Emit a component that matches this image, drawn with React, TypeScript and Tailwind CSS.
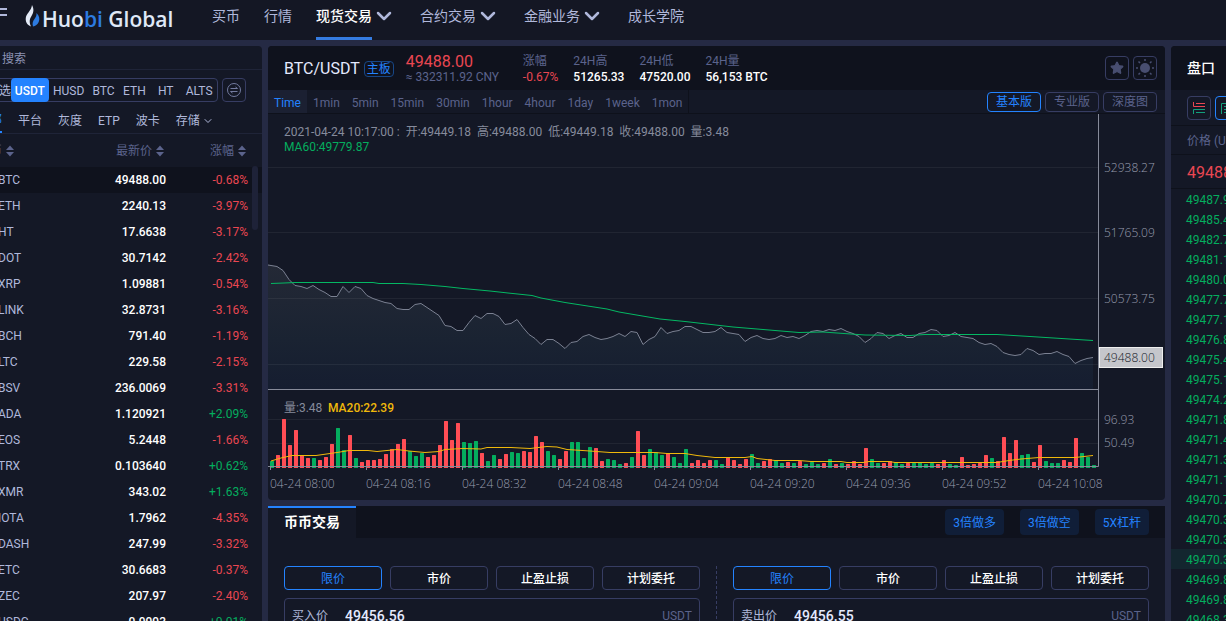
import React from 'react';
import { ChevronDown, Star } from 'lucide-react';

const topNav = [
  { label: '买币' },
  { label: '行情' },
  { label: '现货交易', menu: true, active: true },
  { label: '合约交易', menu: true },
  { label: '金融业务', menu: true },
  { label: '成长学院' },
];

const coins = [
  ['BTC', '49488.00', '-0.68%'],
  ['ETH', '2240.13', '-3.97%'],
  ['HT', '17.6638', '-3.17%'],
  ['DOT', '30.7142', '-2.42%'],
  ['XRP', '1.09881', '-0.54%'],
  ['LINK', '32.8731', '-3.16%'],
  ['BCH', '791.40', '-1.19%'],
  ['LTC', '229.58', '-2.15%'],
  ['BSV', '236.0069', '-3.31%'],
  ['ADA', '1.120921', '+2.09%'],
  ['EOS', '5.2448', '-1.66%'],
  ['TRX', '0.103640', '+0.62%'],
  ['XMR', '343.02', '+1.63%'],
  ['IOTA', '1.7962', '-4.35%'],
  ['DASH', '247.99', '-3.32%'],
  ['ETC', '30.6683', '-0.37%'],
  ['ZEC', '207.97', '-2.40%'],
  ['USDC', '0.9993', '+0.01%'],
];

const asks = [
  '49487.99', '49485.40', '49482.75', '49481.10', '49480.00', '49477.70', '49477.10',
  '49476.88', '49475.40', '49475.10', '49474.20', '49471.80', '49471.40', '49471.30',
  '49471.10', '49470.70', '49470.36', '49470.35', '49470.33', '49469.88', '49469.80',
  '49468.30',
];

const intervals = ['Time', '1min', '5min', '15min', '30min', '1hour', '4hour', '1day', '1week', '1mon'];

const stats = [
  { label: '涨幅', value: '-0.67%', down: true },
  { label: '24H高', value: '51265.33' },
  { label: '24H低', value: '47520.00' },
  { label: '24H量', value: '56,153 BTC' },
];

// One point per minute, 6 units apart
const price = [
  151, 152, 156, 165, 171, 172, 174, 171, 175, 178, 182, 182, 172, 178, 172, 174, 181, 184, 186, 188,
  189, 194, 195, 195, 190, 189, 193, 197, 201, 211, 212, 216, 216, 208, 201, 204, 199, 199, 202, 210,
  209, 205, 213, 220, 224, 230, 225, 225, 229, 234, 228, 227, 222, 220, 223, 225, 224, 222, 219, 222,
  217, 218, 230, 225, 222, 213, 219, 217, 216, 212, 212, 215, 218, 218, 217, 213, 218, 219, 220, 227,
  223, 221, 224, 225, 224, 221, 223, 222, 224, 221, 217, 216, 217, 215, 216, 214, 217, 219, 222, 228,
  224, 218, 219, 224, 221, 219, 223, 223, 219, 218, 215, 216, 222, 221, 218, 222, 223, 224, 228, 230,
  229, 232, 238, 240, 241, 240, 234, 236, 240, 239, 239, 237, 240, 242, 249, 246, 244, 243,
];

const ma60 =
  '3,169.5 16,169 27,168.5 105,168.5 111,169.5 135,169.5 153,170.5 177,172.5 195,174.5 222,177 240,179 264,181.5 273,184 297,188.5 339,195 351,198 392,205 417,207.5 465,213 531,218.5 555,218 597,221 642,221.5 657,220.5 729,220.5 762,222.5 825,226.5';

const ma20 =
  '3,347 13,344 24,341.5 48,341.5 69,338.5 81,336.5 100,336.5 109,337.5 129,335.5 141,337 157,338.5 171,337.5 177,335.5 195,334.5 213,335 219,333.5 243,333.5 262,334.5 279,332.5 289,333 299,335.5 322,337 342,338.5 387,338.5 399,339.5 417,339.5 429,341.5 447,343.5 477,343.5 484,342.5 489,344.5 507,346.5 531,346.5 543,347.5 573,347.5 579,348.5 595,348.5 601,347.5 621,347.5 627,348.5 729,348.5 741,346.5 753,345 771,343.5 807,343.5 825,341.5';

const volumes =
  'g5 r11 r47 r21 r36 r11 r8 g8 r6 r9 r22 g38 g16 r31 g8 r4 r6 r6 r7 r12 r17 r22 r27 g15 g10 g13 r9 r11 r21 r45 r26 r43 g24 g23 g25 r13 g5 g11 r7 r12 g14 g13 r15 r14 r30 r24 g15 g11 r7 r15 g24 g24 g8 g19 r18 r5 g7 g6 g2 r3 g9 r35 r11 g17 g14 g11 r13 g9 g3 g17 r3 r6 r3 r6 g6 g2 r9 r6 r2 r7 g12 g3 r5 r7 g6 g3 r4 g3 r5 g2 g4 g2 r3 g7 r2 g3 r2 r5 r2 r18 g7 g3 r3 r5 g4 g2 r3 g3 g4 g2 g3 r2 r6 g2 g1 r9 r1 r2 r3 r11 g8 r5 r29 r13 r26 g11 g12 r4 r21 g5 g3 g3 r6 r4 r28 g13 g9 g1'
    .split(' ')
    .map((v) => ({ up: v[0] === 'g', h: Number(v.slice(1)) }));

const times = ['08:00', '08:16', '08:32', '08:48', '09:04', '09:20', '09:36', '09:52', '10:08'];

export default function App() {
  return (
    <div className="flex h-screen flex-col overflow-hidden bg-[#252a44] font-['Roboto','Noto_Sans_CJK_SC',sans-serif] text-xs text-[#b0b8db]">
      <Header />
      <div className="mt-1.5 flex min-h-0 flex-1 gap-1.5">
        <MarketList />
        <main className="flex min-w-0 flex-1 flex-col gap-1.5">
          <ChartPanel />
          <TradePanel />
        </main>
        <OrderBook />
      </div>
    </div>
  );
}

function Header() {
  return (
    <header className="flex h-10 shrink-0 bg-[#141724]">
      <button aria-label="菜单" className="mt-2 h-2 w-[7px] shrink-0 border-y-2 border-[#b0b8db]" />
      <a href="#" aria-label="Huobi Global" className="ml-[18px] flex h-9 w-[187px] shrink-0 items-center whitespace-nowrap">
        <svg viewBox="0 0 16 24" className="mt-[-4px] h-6 w-4">
          <path d="M7 1C9 5 9 8 6.500 12C4.500 15 4 18 6 22.500C2 21 .7 18 .7 15C.7 9.500 6.500 7 7 1Z" fill="#e4ebf7" />
          <path d="M11.500 9C14.500 12 15 15 13.700 18C12.600 20.500 10.500 22 8 22.500C7 19 8 17 9.500 15C11 13 11.700 11.500 11.500 9Z" fill="#2d7be0" />
        </svg>
        <span className="ml-px pt-0.5 font-['Open_Sans','Noto_Sans',sans-serif] text-[21px] font-semibold text-[#dfe8f7]">
          Huo<span className="text-[#2d7be0]">bi</span> Global
        </span>
      </a>
      <nav className="flex shrink-0 text-sm">
        {topNav.map((item) => (
          <a
            key={item.label}
            href="#"
            className={`mr-6 flex h-10 items-start pt-1.5 ${item.active ? 'font-medium text-white' : ''}`}
          >
            <span className={`h-[34px] ${item.active ? 'border-b-[3px] border-[#357ce1]' : ''}`}>{item.label}</span>
            {item.menu && <ChevronDown size={24} strokeWidth={2.5} className="-mt-0.5 text-[#b0b8db]" />}
          </a>
        ))}
      </nav>
    </header>
  );
}

function SortIcon() {
  return (
    <svg viewBox="0 0 8 12" className="h-3 w-2" fill="#5b638c">
      <path d="M4 0.500L8 5H0Z" />
      <path d="M4 11.500L0 7H8Z" />
    </svg>
  );
}

function MarketList() {
  return (
    <aside className="relative w-[262px] shrink-0 overflow-hidden rounded-tr-sm bg-[#141826]">
      <div className="-ml-4">
        <div className="flex h-6 items-center border-b border-[#1f2438] pt-0.5 pl-[18px]">
          <input
            aria-label="搜索"
            placeholder="搜索"
            className="w-full bg-transparent outline-none placeholder:text-[#8c93b4]"
          />
        </div>
        <div className="mt-2 flex h-6 gap-1">
          <div className="flex w-[234px] shrink-0 items-center rounded-sm border border-[#373d63]">
            <button className="w-[26px] pt-0.5 text-right">自选</button>
            <button className="h-6 w-[38px] rounded-sm bg-[#2483ff] pt-0.5 font-medium text-white">USDT</button>
            <button className="w-10 pt-0.5">HUSD</button>
            <button className="w-[30px] pt-0.5">BTC</button>
            <button className="w-8 pt-0.5">ETH</button>
            <button className="w-[31px] pt-0.5">HT</button>
            <button className="w-9 pt-0.5">ALTS</button>
          </div>
          <button aria-label="切换计价" className="flex w-6 items-center justify-center rounded-sm border border-[#373d63]">
            <svg viewBox="0 0 16 16" className="h-4 w-4" fill="none" stroke="#737b9f">
              <circle cx="8" cy="8" r="6.500" />
              <path d="M4.500 6.500H11.500L9.500 5M11.500 9.500H4.500L6.500 11" />
            </svg>
          </button>
        </div>
        <div className="flex h-8 items-center gap-4 border-b border-[#1f2438] pt-1.5">
          <button className="h-full w-[18px] shrink-0 overflow-hidden border-b-2 border-[#2483ff] whitespace-nowrap text-[#2483ff]">
            <span className="float-right">全部</span>
          </button>
          <button className="shrink-0">平台</button>
          <button className="shrink-0">灰度</button>
          <button className="shrink-0">ETP</button>
          <button className="shrink-0">波卡</button>
          <button className="flex shrink-0 items-center gap-0.5">
            存储
            <ChevronDown size={12} />
          </button>
        </div>
        <table className="w-full table-fixed">
          <thead>
            <tr className="h-[33px] text-[#5b638c]">
              <th className="w-[84px] font-normal">
                <span className="flex items-center gap-1 pl-1.5">
                  币 <SortIcon />
                </span>
              </th>
              <th className="pr-0.5 font-normal">
                <span className="flex items-center justify-end gap-1">
                  最新价 <SortIcon />
                </span>
              </th>
              <th className="w-24 pr-4 font-normal">
                <span className="flex items-center justify-end gap-1">
                  涨幅 <SortIcon />
                </span>
              </th>
            </tr>
          </thead>
          <tbody>
            {coins.map(([name, last, change], i) => (
              <tr key={name} className={`h-[26px] ${i === 0 ? 'bg-[#0f121d]' : ''}`}>
                <td className="pl-3.5">{name}</td>
                <td className="text-right font-medium text-white">{last}</td>
                <td className={`pr-3.5 text-right ${change[0] === '+' ? 'text-[#04ad5e]' : 'text-[#ea4752]'}`}>
                  {change}
                </td>
              </tr>
            ))}
          </tbody>
        </table>
      </div>
      {/* scrollbar thumb */}
      <div className="absolute top-[120px] right-1 h-16 w-1.5 rounded-sm bg-[#1e2238]" />
    </aside>
  );
}

function ChartPanel() {
  return (
    <section className="shrink-0 overflow-hidden rounded-sm bg-[#141826]">
      <div className="flex h-11 items-center bg-[#0f121d] pr-2 pl-4">
        <h1 className="pt-0.5 text-base text-[#e4e9ff]">BTC/USDT</h1>
        <span className="mt-0.5 ml-1 rounded-sm border border-[#174787] px-0.5 leading-3.5 text-[#2483ff]">主板</span>
        <div className="ml-3 w-[117px] pt-0.5">
          <div className="text-base leading-4 text-[#ea4752]">49488.00</div>
          <div className="leading-3.5 text-[#5b638c]">≈ 332311.92 CNY</div>
        </div>
        <dl className="flex gap-[15px] pt-0.5">
          {stats.map((s) => (
            <div key={s.label}>
              <dt className="leading-4 text-[#5b638c]">{s.label}</dt>
              <dd className={`leading-4 ${s.down ? 'text-[#ea4752]' : 'font-medium text-white'}`}>{s.value}</dd>
            </div>
          ))}
        </dl>
        <div className="ml-auto flex gap-1">
          <button aria-label="收藏" className="flex h-6 w-6 items-center justify-center rounded-sm border border-[#373d63]">
            <Star size={14} fill="#484e70" className="text-[#484e70]" />
          </button>
          <button aria-label="主题" className="flex h-6 w-6 items-center justify-center rounded-sm border border-[#373d63]">
            <svg viewBox="0 0 18 18" className="h-[18px] w-[18px]" fill="#484e70">
              <circle cx="9" cy="9" r="5" />
              <path
                d="M9 0V2M9 16V18M0 9H2M16 9H18M2.500 2.500L4 4M14 14L15.500 15.500M2.500 15.500L4 14M14 4L15.500 2.500"
                stroke="#484e70"
                strokeWidth="1.500"
              />
            </svg>
          </button>
        </div>
      </div>
      <div className="flex h-6 items-center border-b border-[#0e111b] pr-2 text-[#5b638c]">
        <div className="flex h-full border-r border-[#0e111b]">
          {intervals.map((t) => (
            <button key={t} className={`h-full px-1.5 pt-0.5 ${t === 'Time' ? 'bg-[#1b2032] text-[#2483ff]' : ''}`}>
              {t}
            </button>
          ))}
        </div>
        <div className="ml-auto flex gap-1">
          <button className="h-5 w-[54px] rounded-sm border border-[#2483ff] text-[#2483ff]">基本版</button>
          <button className="h-5 w-[54px] rounded-sm border border-[#373d63]">专业版</button>
          <button className="h-5 w-[54px] rounded-sm border border-[#373d63]">深度图</button>
        </div>
      </div>
      <PriceChart />
    </section>
  );
}

function PriceChart() {
  const line = '0,151 ' + price.map((y, i) => `${3 + i * 6},${y + 0.5}`).join(' ');
  return (
    <svg viewBox="0 0 897 386" className="block w-full" fontSize="12">
      <defs>
        <linearGradient id="area" x1="0" y1="0" x2="0" y2="1">
          <stop offset="0" stopColor="#242936" />
          <stop offset="0.6" stopColor="#1a2332" />
          <stop offset="1" stopColor="#151d30" />
        </linearGradient>
      </defs>

      <polygon points={`${line} 825,275 0,275`} fill="url(#area)" />
      <path
        d="M0 53.500H830M0 118.500H830M0 184.500H830M0 250.500H830M0 305.500H830M0 329.500H830"
        stroke="#ffffff"
        strokeOpacity="0.06"
      />
      <polyline points={line} fill="none" stroke="#7b8192" />
      <polyline points={ma60} fill="none" stroke="#04b863" />

      {volumes.map((v, i) => (
        <rect key={i} x={2 + i * 6} y={352 - v.h} width="4" height={v.h + 2} rx="0.5" fill={v.up ? '#04ad5e' : '#ff4d55'} />
      ))}
      <polyline points={ma20} fill="none" stroke="#f0b90b" />
      <path d="M0 275.500H830M830.500 0V352.500H0" fill="none" stroke="#868a99" />

      <g fill="#868b9c">
        <text x="16" y="22" xmlSpace="preserve">
          2021-04-24 10:17:00 :  开:49449.18  高:49488.00  低:49449.18  收:49488.00  量:3.48
        </text>
        <text x="16" y="298">量:3.48</text>
      </g>
      <text x="16" y="37" fill="#04ad5e">MA60:49779.87</text>
      <text x="60" y="298" fill="#f0b90b" fontWeight="500">MA20:22.39</text>

      <g fill="#989dae" className="font-['Open_Sans','Noto_Sans',sans-serif] font-light">
        <text x="836" y="58">52938.27</text>
        <text x="836" y="123">51765.09</text>
        <text x="836" y="189">50573.75</text>
        <text x="836" y="310">96.93</text>
        <text x="836" y="333">50.49</text>
        {times.map((t, i) => (
          <g key={t}>
            <path d={`M${2.5 + i * 96} 352V356`} stroke="#868a99" />
            <text x={2 + i * 96} y="374">04-24 {t}</text>
          </g>
        ))}
        <rect x="831.500" y="233.500" width="63" height="20" fill="#c5c6cb" stroke="#eeeeee" />
        <text x="836" y="248" fill="#141826">49488.00</text>
      </g>
    </svg>
  );
}

function TradePanel() {
  return (
    <section className="flex min-h-0 flex-1 flex-col overflow-hidden bg-[#141826]">
      <div className="flex h-8 shrink-0 items-center bg-[#0f121d] pr-4">
        <button className="h-8 w-[88px] border-t-2 border-[#2483ff] bg-[#141826] pb-0.5 text-sm font-bold text-white">
          币币交易
        </button>
        <div className="ml-auto flex gap-4 text-[#2483ff]">
          <button className="h-[26px] rounded-sm bg-[#101e38] px-2 pt-0.5">3倍做多</button>
          <button className="h-[26px] rounded-sm bg-[#101e38] px-2 pt-0.5">3倍做空</button>
          <button className="h-[26px] rounded-sm bg-[#101e38] px-2 pt-0.5">5X杠杆</button>
        </div>
      </div>
      <div className="mt-7 flex flex-1 px-4">
        <OrderForm label="买入价" value="49456.56" />
        <div className="mx-4 border-l border-dashed border-[#373d63]" />
        <OrderForm label="卖出价" value="49456.55" />
      </div>
    </section>
  );
}

function OrderForm({ label, value }: { label: string; value: string }) {
  return (
    <form className="flex-1">
      <div className="grid grid-cols-4 gap-2">
        <button type="button" className="h-6 rounded-sm border border-[#2483ff] pt-0.5 text-[#2483ff]">限价</button>
        {['市价', '止盈止损', '计划委托'].map((t) => (
          <button key={t} type="button" className="h-6 rounded-sm border border-[#373d63] pt-0.5 font-medium text-white">
            {t}
          </button>
        ))}
      </div>
      <label className="mt-2 flex h-9 items-center rounded-sm border border-[#373d63] px-[7px]">
        <span className="w-[53px] shrink-0">{label}</span>
        <input
          defaultValue={value}
          className="min-w-0 flex-1 bg-transparent text-sm font-medium text-[#e4e9ff] outline-none"
        />
        <span className="text-[#5b638c]">USDT</span>
      </label>
    </form>
  );
}

function OrderBook() {
  return (
    <aside className="w-[55px] shrink-0 overflow-hidden rounded-tl-sm bg-[#141826] whitespace-nowrap">
      <h2 className="flex h-11 items-center bg-[#0f121d] pl-4 text-sm font-medium text-white">盘口</h2>
      <div className="flex h-9 items-center gap-1 border-b border-[#0e111b] pl-4">
        <button aria-label="买卖盘" className="flex h-6 w-6 shrink-0 items-center justify-center rounded-sm border border-[#373d63]">
          <svg viewBox="0 0 14 14" className="h-3.5 w-3.5 shrink-0" fill="none">
            <path d="M1.500 1V5.500H13M4 2.500H13" stroke="#ea4752" />
            <path d="M1.500 13V8.500H13M4 11.500H13" stroke="#12a07c" />
          </svg>
        </button>
        <button aria-label="买盘" className="flex h-6 w-6 shrink-0 items-center justify-center rounded-sm border border-[#2483ff]">
          <svg viewBox="0 0 14 14" className="h-3.5 w-3.5 shrink-0" fill="none" stroke="#12a07c">
            <path d="M1.500 13V2.500H13M4 5.500H13M4 8.500H13M4 11.500H13" />
          </svg>
        </button>
      </div>
      <div className="flex h-[29px] items-center border-b border-[#0e111b] pt-0.5 pl-4 text-[#5b638c]">价格 (USDT)</div>
      <div className="flex h-[34px] items-center border-b border-[#0e111b] pt-0.5 pl-4 text-base text-[#ea4752]">49488.00</div>
      <ul className="text-[#04ad5e]">
        {asks.map((p, i) => (
          <li key={p} className={`h-5 pl-[15px] leading-[22px] ${i === 18 ? 'bg-[#13262f]' : ''}`}>
            {p}
          </li>
        ))}
      </ul>
    </aside>
  );
}
